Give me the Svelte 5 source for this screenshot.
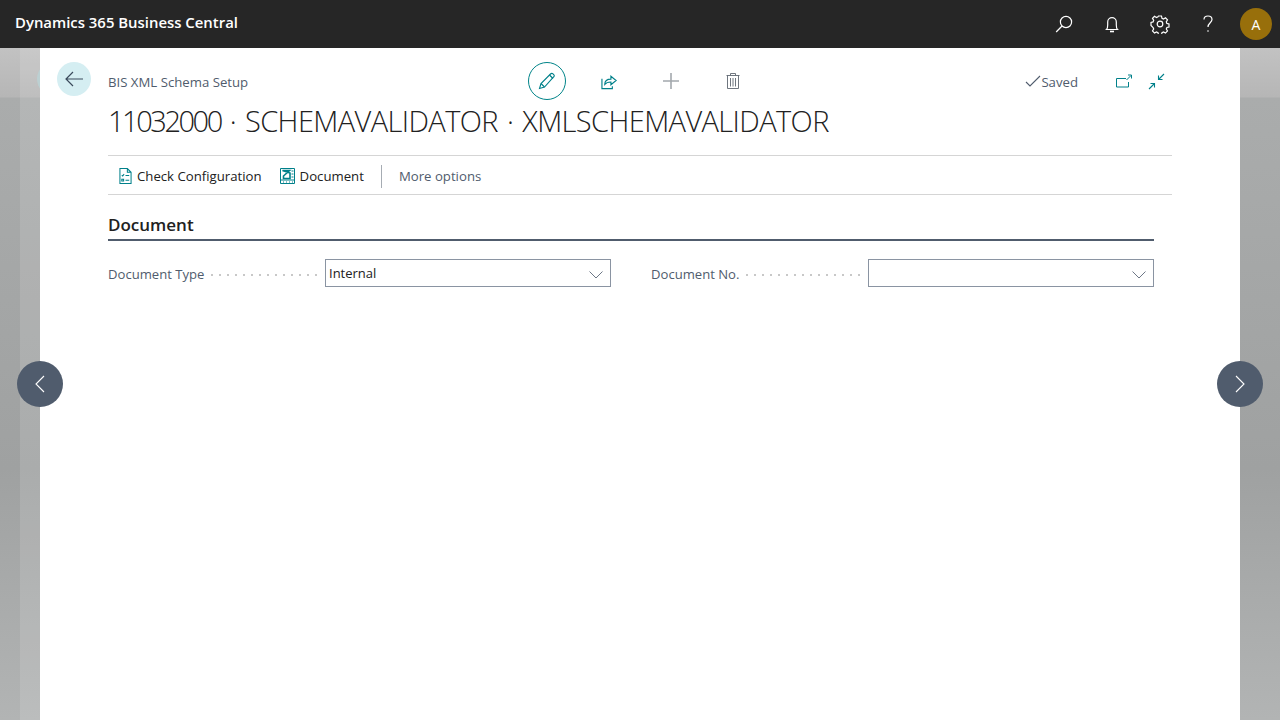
<script>
  const actions = [
    { label: 'Check Configuration', icon: 'check' },
    { label: 'Document', icon: 'doc' }
  ]
  const fields = [
    { label: 'Document Type', value: 'Internal' },
    { label: 'Document No.', value: '' }
  ]
</script>

<div class="page">
  <div class="backdrop">
    <div class="under-panel"></div>
    <div class="under-back"></div>
  </div>

  <header class="topbar">
    <span class="brand">Dynamics 365 Business Central</span>
    <div class="top-icons">
      <button class="top-btn" aria-label="Search">
        <svg width="20" height="20" viewBox="0 0 20 20" fill="none" stroke="#fff" stroke-width="1.2"><circle cx="12" cy="8" r="5.6" /><path d="M8 12 2.2 18" /></svg>
      </button>
      <button class="top-btn" aria-label="Notifications">
        <svg width="20" height="20" viewBox="0 0 20 20" fill="none" stroke="#fff" stroke-width="1.2"><path d="M4.5 15.5c1-1 1.2-2.5 1.2-4.5V8a4.3 4.3 0 0 1 8.6 0v3c0 2 .2 3.5 1.2 4.5z" /><path d="M8 17.5h4" stroke-width="1.6" /></svg>
      </button>
      <button class="top-btn" aria-label="Settings">
        <svg width="20" height="20" viewBox="0 0 20 20" fill="none" stroke="#fff" stroke-width="1.2"><circle cx="10" cy="10" r="2.8" /><path d="M8.5 2h3l.5 2.3 1.5.7 2-1.2 2 2.1-1.2 2 .6 1.500 2.100.6v3l-2.100.5-.6 1.500 1.200 2-2 2.100-2-1.200-1.500.7-.5 2.300h-3l-.5-2.300-1.500-.7-2 1.200-2-2.100 1.200-2-.6-1.500L1 11.500v-3l2.100-.6.6-1.500-1.200-2 2-2.100 2 1.200 1.500-.7z" /></svg>
      </button>
      <button class="top-btn" aria-label="Help">
        <svg width="20" height="20" viewBox="0 0 20 20" fill="none" stroke="#fff" stroke-width="1.2"><path d="M6 5.5C6 3.3 7.8 2 10 2s4 1.4 4 3.5c0 3.3-4 3.3-4 7.5" /><circle cx="10" cy="17" r=".8" fill="#fff" stroke="none" /></svg>
      </button>
      <span class="avatar">A</span>
    </div>
  </header>

  <main class="sheet">
    <div class="sheet-head">
      <button class="back" aria-label="Back">
        <svg width="18" height="16" viewBox="0 0 18 16" fill="none" stroke="#3b4a5c" stroke-width="1.2"><path d="M8 1 1 8l7 7M1 8h17" /></svg>
      </button>
      <div class="head-main">
        <div class="head-row">
          <span class="crumb">BIS XML Schema Setup</span>
          <div class="tools">
            <button class="tool edit" aria-label="Edit">
              <svg width="18" height="18" viewBox="0 0 18 18" fill="none" stroke="#00808a" stroke-width="1.1"><path d="M1.5 16.5 3 11.5 12.5 2c.8-.8 1.8-.8 2.5-.1l.7.7c.7.7.6 1.7-.1 2.4L6.5 15z" /><path d="M3 11.5 6.5 15M11.5 3 15 6.500" /></svg>
            </button>
            <button class="tool" aria-label="Share">
              <svg width="17" height="17" viewBox="1 0 18 18" fill="none" stroke="#00808a" stroke-width="1.2"><path d="M2 6v10.500h11V14" /><path d="M5 12c0-4 3-5.500 6.500-5.500V3.500L17 8l-5.500 4.500V9.500C9 9.500 6.500 10 5 12z" /></svg>
            </button>
            <button class="tool" aria-label="New">
              <svg width="18" height="18" viewBox="0 0 18 18" fill="none" stroke="#a3a8ad" stroke-width="1.6"><path d="M9 1v16M1 9h16" /></svg>
            </button>
            <button class="tool" aria-label="Delete">
              <svg width="18" height="18" viewBox="0 0 18 18" fill="none" stroke="#5f6670" stroke-width=".9"><path d="M2.5 3.5h13M6.500 3.500v-2h5v2M3.500 3.500v13h11v-13M6.500 6v8.500M9 6v8.500M11.500 6v8.500" /></svg>
            </button>
          </div>
          <div class="status">
            <span class="saved">
              <svg width="16" height="12" viewBox="0 0 16 12" fill="none" stroke="#505c6d" stroke-width="1.1"><path d="M1 7l4 4L15 1" /></svg>
              <span class="saved-text">Saved</span>
            </span>
            <button class="tool small" aria-label="Open in new window">
              <svg width="16" height="14" viewBox="0 0 16 14" fill="none" stroke="#00808a" stroke-width="1"><path d="M10 4.500H.5v8.500h12V8" /><path d="M10.500 6 15 1.500M12 1h3.500v3.500" /></svg>
            </button>
            <button class="tool small" aria-label="Collapse">
              <svg width="17" height="17" viewBox="0 0 17 17" fill="none" stroke="#00808a" stroke-width="1.1"><path d="M16 1l-5.500 5.500M10.500 2.500v4h4M1 16l5.500-5.500M6.500 14.500v-4h-4" /></svg>
            </button>
          </div>
        </div>
        <h1><span class="num">11032000</span> · SCHEMAVALIDATOR · XMLSCHEMAVALIDATOR</h1>
      </div>
    </div>

    <nav class="actions">
      {#each actions as a}
        <button class="action">
          {#if a.icon === 'check'}
            <svg width="13" height="16" viewBox="0 0 14 17" fill="none" stroke="#00808a" stroke-width="1.1"><path d="M1 .5h8l4 4v12H1zM9 .5v4h4" /><path d="M3 7.500l1 1 1.500-2M7 8h4M3 12h2v2H3zM7 13h4" /></svg>
          {:else}
            <svg width="15" height="16" viewBox="0 0 15 16" fill="none" stroke="#00808a" stroke-width="1"><path d="M.5 .5h14v15H.5zM.5 12h14" /><path d="M2.500 2.500h7L3.500 8v2.500h6.500V5z" stroke-width="1.600" /><path d="M11.500 3h2M11.500 6h2M11.500 9h2M3 14h1M6 14h1M9 14h1M12 14h1" /></svg>
          {/if}
          {a.label}
        </button>
      {/each}
      <span class="divider"></span>
      <button class="action more">More options</button>
    </nav>

    <section class="group">
      <h2>Document</h2>
      <div class="fields">
        {#each fields as f}
          <div class="field">
            <span class="label">{f.label}</span>
            <span class="dots"></span>
            <div class="select">
              <span>{f.value}</span>
              <svg width="14" height="8" viewBox="0 0 14 8" fill="none" stroke="#6d7786" stroke-width="1"><path d="M.5 .5 7 7l6.500-6.500" /></svg>
            </div>
          </div>
        {/each}
      </div>
    </section>
  </main>

  <button class="nav prev" aria-label="Previous">
    <svg width="10" height="18" viewBox="0 0 10 18" fill="none" stroke="#fff" stroke-width="1.1"><path d="M9 1 1 9l8 8" /></svg>
  </button>
  <button class="nav next" aria-label="Next">
    <svg width="10" height="18" viewBox="0 0 10 18" fill="none" stroke="#fff" stroke-width="1.1"><path d="m1 1 8 8-8 8" /></svg>
  </button>
</div>

<style>
  :global(body) {
    margin: 0;
    font-family: "Open Sans", "Noto Sans", sans-serif;
  }
  .page {
    position: relative;
    width: 1280px;
    height: 720px;
    overflow: hidden;
    display: flex;
    flex-direction: column;
    background: #fff;
  }
  button {
    background: none;
    border: none;
    padding: 0;
    font: inherit;
    color: inherit;
    display: inline-flex;
    align-items: center;
    justify-content: center;
  }
  .backdrop {
    position: absolute;
    inset: 48px 0 0;
    background: linear-gradient(180deg, #c2c2c2 0, #b6b6b6 49px, #aaacac 50px, #9fa1a1 420px, #b2b4b4 672px);
  }
  .under-panel {
    position: absolute;
    left: 20px;
    top: 0;
    bottom: 0;
    width: 20px;
    background: rgba(255, 255, 255, 0.12);
  }
  .under-back {
    position: absolute;
    left: 37px;
    top: 14px;
    width: 34px;
    height: 34px;
    border-radius: 50%;
    background: #bcd0d2;
  }
  .topbar {
    position: relative;
    height: 48px;
    flex: none;
    box-sizing: border-box;
    background: #262626;
    color: #fff;
    display: flex;
    align-items: center;
    justify-content: space-between;
    padding: 0 8px 0 15px;
  }
  .brand {
    font-size: 14.9px;
    font-weight: 600;
    padding-bottom: 4px;
  }
  .top-icons {
    display: flex;
    align-items: center;
  }
  .top-btn {
    width: 48px;
    height: 48px;
  }
  .avatar {
    width: 32px;
    height: 32px;
    border-radius: 50%;
    background: #986f0b;
    margin-left: 8px;
    font-size: 14px;
    display: flex;
    align-items: center;
    justify-content: center;
  }
  .sheet {
    position: relative;
    flex: 1;
    margin: 0 40px;
    background: #fff;
    padding: 14px 68px 0 17px;
  }
  .sheet-head {
    display: flex;
    gap: 17px;
  }
  .back {
    width: 34px;
    height: 34px;
    border-radius: 50%;
    background: #d5eef2;
    flex: none;
  }
  .head-main {
    flex: 1;
  }
  .head-row {
    display: flex;
    align-items: center;
    height: 38px;
  }
  .crumb {
    width: 420px;
    font-size: 13.2px;
    color: #505c6d;
    padding-top: 2px;
  }
  .tools {
    display: flex;
    align-items: center;
    gap: 24px;
  }
  .tool {
    width: 38px;
    height: 38px;
  }
  .edit {
    border: 1px solid #008489;
    border-radius: 50%;
    box-sizing: border-box;
  }
  .status {
    display: flex;
    align-items: center;
    margin-left: auto;
    margin-right: -1px;
  }
  .saved {
    display: flex;
    align-items: center;
    font-size: 13.2px;
    color: #505c6d;
    margin-right: 29px;
  }
  .saved-text {
    padding-top: 2px;
  }
  .small {
    width: 33px;
    height: 24px;
  }
  h1 {
    margin: 0;
    padding-top: 1px;
    font-size: 29px;
    font-weight: 300;
    letter-spacing: -0.6px;
    word-spacing: 2px;
    color: #212121;
    line-height: 40px;
    white-space: nowrap;
  }
  .num {
    letter-spacing: -2.45px;
  }
  .actions {
    display: flex;
    align-items: center;
    box-sizing: border-box;
    height: 40px;
    margin: 14px 0 0 51px;
    border-top: 1px solid #d5d5d5;
    border-bottom: 1px solid #d5d5d5;
    padding: 2px 0 0 11px;
    font-size: 13.2px;
    color: #212121;
  }
  .action {
    gap: 5px;
    margin-right: 18px;
  }
  .divider {
    width: 1px;
    height: 23px;
    background: #a6acb3;
    margin: 0 17px 0 -1px;
  }
  .more {
    color: #505c6d;
  }
  .group {
    margin: 19px 18px 0 51px;
  }
  h2 {
    margin: 0;
    font-size: 17px;
    font-weight: 600;
    line-height: 22px;
    color: #212121;
    padding-bottom: 3px;
    border-bottom: 2px solid #505c6d;
  }
  .fields {
    display: grid;
    grid-template-columns: 503px 503px;
    column-gap: 40px;
    margin-top: 17px;
  }
  .field {
    display: flex;
    align-items: center;
    height: 30px;
  }
  .label {
    font-size: 13.1px;
    color: #505c6d;
    white-space: nowrap;
    padding-top: 1px;
  }
  .dots {
    flex: 1;
    height: 2px;
    margin: 3px 2px 0 4px;
    background: radial-gradient(circle, #c8c8c8 1px, transparent 1px) 0 0 / 8px 2px repeat-x;
  }
  .select {
    width: 286px;
    height: 28px;
    box-sizing: border-box;
    border: 1px solid #8a94a2;
    display: flex;
    align-items: center;
    justify-content: space-between;
    padding: 0 7px 0 3px;
    font-size: 13px;
    color: #212121;
    flex: none;
  }
  .select svg {
    margin-top: 3px;
  }
  .nav {
    position: absolute;
    top: 361px;
    width: 46px;
    height: 46px;
    border-radius: 50%;
    background: #505c6d;
  }
  .prev { left: 17px; }
  .next { right: 17px; }
</style>
